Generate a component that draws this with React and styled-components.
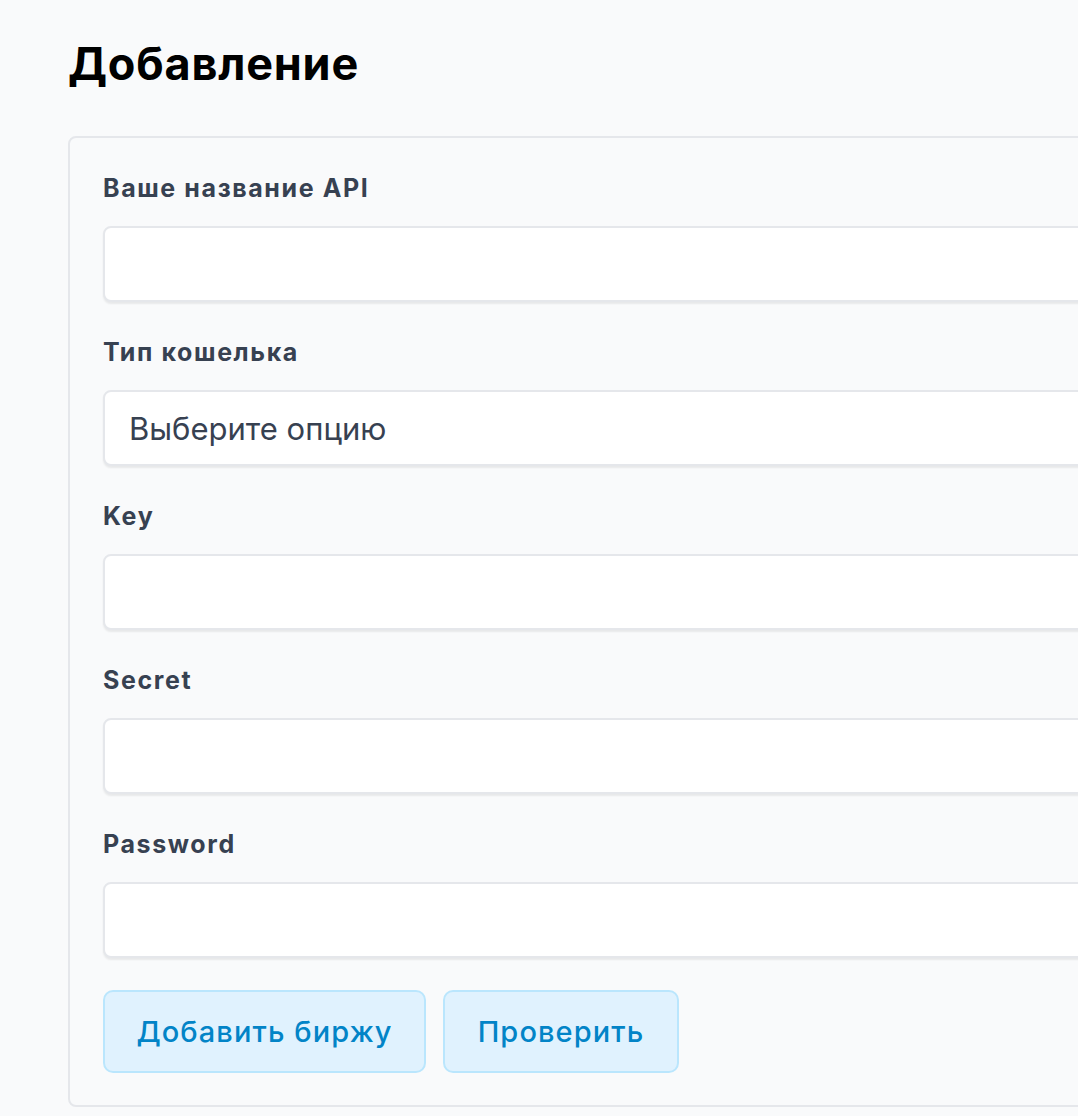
import React from 'react'
import styled, { createGlobalStyle } from 'styled-components'

const GlobalStyle = createGlobalStyle`
  html, body {
    margin: 0;
    padding: 0;
    background: #f9fafb;
    overflow: hidden;
  }
  body {
    font-family: Inter, "Noto Sans", "Liberation Sans", sans-serif;
  }
`

const fields = [
  { label: 'Ваше название API' },
  { label: 'Тип кошелька', select: true },
  { label: 'Key' },
  { label: 'Secret' },
  { label: 'Password', type: 'password' },
]

const App = () => {
  return (
    <>
      <GlobalStyle />
      <Page>
        <Title>Добавление</Title>
        <Card>
          {fields.map((f) => (
            <Field key={f.label}>
              <Label>{f.label}</Label>
              {f.select ? (
                <Select defaultValue=''>
                  <option value=''>Выберите опцию</option>
                </Select>
              ) : (
                <Input type={f.type || 'text'} />
              )}
            </Field>
          ))}
          <Actions>
            <Button $width={323}>Добавить биржу</Button>
            <Button $width={236}>Проверить</Button>
          </Actions>
        </Card>
      </Page>
    </>
  )
}

export default App

const Page = styled.div`
  padding: 40px 0 0 68px;
  width: 1200px;
`

const Title = styled.h1`
  margin: 0 0 48px;
  font-size: 45px;
  line-height: 48px;
  font-weight: 700;
  color: #000;
  letter-spacing: 0.8px;
`

const Card = styled.div`
  width: 1060px;
  box-sizing: border-box;
  border: 2px solid #e5e7eb;
  border-radius: 8px;
  padding: 32px 33px 32px 33px;
  background: #f9fafb;
`

const Field = styled.div`
  display: flex;
  flex-direction: column;
  margin-bottom: 32px;
`

const Label = styled.label`
  font-size: 25px;
  line-height: 36px;
  font-weight: 700;
  color: #374151;
  letter-spacing: 1.6px;
  margin-bottom: 20px;
`

const controlStyles = `
  box-sizing: border-box;
  width: 100%;
  height: 76px;
  border: 2px solid #e5e7eb;
  border-radius: 8px;
  background: #fff;
  box-shadow: 0 2px 2px rgba(0, 0, 0, 0.07);
  font-family: inherit;
  font-size: 31px;
  color: #374151;
  padding: 0 24px;
  outline: none;
`

const Input = styled.input`
  ${controlStyles}
`

const Select = styled.select`
  ${controlStyles}
  appearance: none;
`

const Actions = styled.div`
  display: flex;
  gap: 17px;
`

const Button = styled.button`
  width: ${(p) => p.$width}px;
  height: 83px;
  box-sizing: border-box;
  background: #e0f2fe;
  border: 2px solid #bae6fd;
  border-radius: 10px;
  color: #0284c7;
  font-family: inherit;
  font-size: 29px;
  font-weight: 500;
  letter-spacing: 1.1px;
  cursor: pointer;
`
